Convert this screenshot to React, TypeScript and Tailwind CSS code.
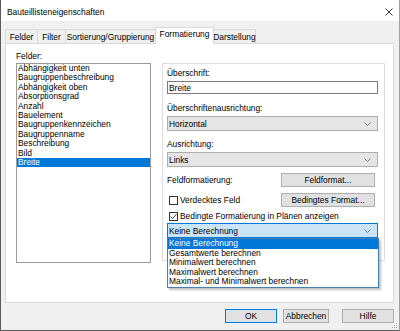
import React from "react";

const items = [
  "Abhängigkeit unten",
  "Baugruppenbeschreibung",
  "Abhängigkeit oben",
  "Absorptionsgrad",
  "Anzahl",
  "Bauelement",
  "Baugruppenkennzeichen",
  "Baugruppenname",
  "Beschreibung",
  "Bild",
  "Breite",
];

const options = [
  "Keine Berechnung",
  "Gesamtwerte berechnen",
  "Minimalwert berechnen",
  "Maximalwert berechnen",
  "Maximal- und Minimalwert berechnen",
];

function Chevron() {
  return (
    <svg width="7" height="4" viewBox="0 0 7 4" className="shrink-0">
      <path d="M0.5 0.5 L3.5 3.5 L6.5 0.5" fill="none" stroke="#707070" strokeWidth="0.9" />
    </svg>
  );
}

function Combo({ text }: { text: string }) {
  return (
    <div className="h-[15px] border border-[#adadad] bg-[#e5e5e5] flex items-center pl-[1px] pr-[6px] justify-between">
      <span>{text}</span>
      <Chevron />
    </div>
  );
}

function Check({ checked }: { checked?: boolean }) {
  return (
    <div className="w-[9px] h-[9px] border border-[#333] bg-white flex items-center justify-center shrink-0">
      {checked && (
        <svg width="7" height="7" viewBox="0 0 7 7">
          <path d="M0.6 3.6 L2.6 5.6 L6.4 1.2" fill="none" stroke="#222" strokeWidth="0.9" />
        </svg>
      )}
    </div>
  );
}

export default function App() {
  return (
    <div className="w-[400px] h-[331px] bg-[#f0f0f0] flex flex-col border-l border-b border-r border-l-[#5a5a5a] border-b-[#5a5a5a] border-r-[#a0a0a0] font-['Liberation_Sans',Arial,sans-serif] text-[8.4px] leading-[10px] text-black overflow-hidden">
      {/* title bar */}
      <div className="h-[21px] bg-white flex items-center justify-between pl-[6px] pr-[6px] shrink-0">
        <span className="text-[8.4px] pt-[3px]">Bauteillisteneigenschaften</span>
        <svg width="8" height="8" viewBox="0 0 8 8" className="mt-[3px]">
          <path d="M0.5 0.5 L7.5 7.5 M7.5 0.5 L0.5 7.5" stroke="#222" strokeWidth="0.9" />
        </svg>
      </div>

      {/* tabs */}
      <div className="h-[22px] flex items-end pl-[4px] shrink-0">
        <div className="w-[33px] h-[14px] border border-b-0 border-[#d9d9d9] bg-[#f0f0f0] flex items-center justify-center">Felder</div>
        <div className="-ml-px w-[29px] h-[14px] border border-b-0 border-[#d9d9d9] bg-[#f0f0f0] flex items-center justify-center">Filter</div>
        <div className="-ml-px w-[91px] h-[14px] border border-b-0 border-[#d9d9d9] bg-[#f0f0f0] flex items-center justify-center">Sortierung/Gruppierung</div>
        <div className="-ml-px w-[59px] h-[17px] -mb-px border border-b-0 border-[#d9d9d9] bg-white relative z-10 flex items-start justify-center pt-[1px]">Formatierung</div>
        <div className="-ml-px w-[43px] h-[14px] border border-b-0 border-[#d9d9d9] bg-[#f0f0f0] flex items-center justify-center">Darstellung</div>
      </div>

      {/* panel */}
      <div className="ml-[4px] w-[389px] h-[260px] border border-[#d9d9d9] bg-white flex pl-[10px] pt-[7px] shrink-0">
        <div className="w-[135px] flex flex-col">
          <div className="h-[10px]">Felder:</div>
          <div className="mt-[2px] h-[200px] border border-[#9a9a9a] bg-white flex flex-col">
            {items.map((it) => (
              <div
                key={it}
                className={
                  "h-[9.4px] leading-[9.4px] pl-[1px] whitespace-nowrap " +
                  (it === "Breite" ? "bg-[#0078d7] text-white" : "")
                }
              >
                {it}
              </div>
            ))}
          </div>
        </div>

        <div className="ml-[11px] mt-[12px] w-[223px] h-[198px] border border-[#dcdcdc] pl-[4px] pr-[6px] flex flex-col">
          <div className="mt-[4px] h-[10px]">Überschrift:</div>
          <div className="mt-[3px] h-[13px] border border-[#7a7a7a] bg-white flex items-center pl-[1px]">Breite</div>
          <div className="mt-[9px] h-[10px]">Überschriftenausrichtung:</div>
          <div className="mt-[3px]">
            <Combo text="Horizontal" />
          </div>
          <div className="mt-[8px] h-[10px]">Ausrichtung:</div>
          <div className="mt-[3px]">
            <Combo text="Links" />
          </div>
          <div className="mt-[6px] h-[14px] flex items-center justify-between pr-[3px]">
            <span>Feldformatierung:</span>
            <div className="w-[94px] h-[14px] border border-[#adadad] bg-[#e1e1e1] flex items-center justify-center">Feldformat...</div>
          </div>
          <div className="mt-[6px] h-[14px] flex items-center justify-between pr-[3px]">
            <div className="flex items-center pl-[2px] gap-[2px]">
              <Check />
              <span>Verdecktes Feld</span>
            </div>
            <div className="w-[94px] h-[14px] border border-[#adadad] bg-[#e1e1e1] flex items-center justify-center">Bedingtes Format...</div>
          </div>
          <div className="mt-[4px] h-[10px] flex items-center pl-[2px] gap-[2px]">
            <Check checked />
            <span>Bedingte Formatierung in Plänen anzeigen</span>
          </div>
          <div className="mt-[2px] relative">
            <div className="h-[15px] border border-[#0078d7] bg-[#cce4f7] flex items-center pl-[1px] pr-[6px] justify-between">
              <span>Keine Berechnung</span>
              <Chevron />
            </div>
            <div className="absolute left-0 top-full w-[212px] border border-[#4a7fad] bg-white z-20 shadow-[2px_2px_2px_rgba(0,0,0,0.25)] flex flex-col">
              {options.map((o, i) => (
                <div
                  key={o}
                  className={
                    "h-[9.5px] leading-[9.5px] pl-[1px] whitespace-nowrap " +
                    (i === 0 ? "bg-[#0078d7] text-white" : "")
                  }
                >
                  {o}
                </div>
              ))}
            </div>
          </div>
        </div>
      </div>

      {/* bottom buttons */}
      <div className="mt-[6px] h-[14px] flex shrink-0">
        <div className="ml-[224px] w-[52px] h-[14px] border border-[#0078d7] bg-[#e1e1e1] flex items-center justify-center">OK</div>
        <div className="ml-[6px] w-[46px] h-[14px] border border-[#adadad] bg-[#e1e1e1] flex items-center justify-center">Abbrechen</div>
        <div className="ml-[13px] w-[52px] h-[14px] border border-[#adadad] bg-[#e1e1e1] flex items-center justify-center">Hilfe</div>
      </div>
      <div className="flex-1 flex justify-end items-end pr-[1px] pb-[1px]">
        <svg width="6" height="6" viewBox="0 0 6 6">
          <rect x="4" y="0" width="1" height="1" fill="#b0b0b0" />
          <rect x="2" y="2" width="1" height="1" fill="#b0b0b0" />
          <rect x="4" y="2" width="1" height="1" fill="#b0b0b0" />
          <rect x="0" y="4" width="1" height="1" fill="#b0b0b0" />
          <rect x="2" y="4" width="1" height="1" fill="#b0b0b0" />
          <rect x="4" y="4" width="1" height="1" fill="#b0b0b0" />
        </svg>
      </div>
    </div>
  );
}
